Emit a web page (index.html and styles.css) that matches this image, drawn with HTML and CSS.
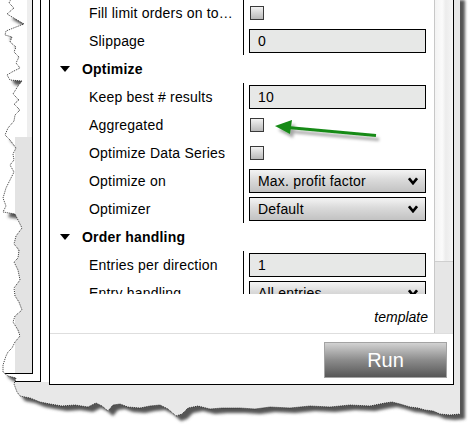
FILE: index.html
```html
<!DOCTYPE html>
<html>
<head>
<meta charset="utf-8">
<link rel="stylesheet" href="styles.css">
</head>
<body>
<div class="shot">
  <div class="pane-b">
    <div class="pane-a">
      <div class="gutter"></div>
      <div class="oscroll"><div class="othumb"></div></div>
    </div>
  </div>
  <div class="main">
    <div class="upper">
      <div class="content">
        <div class="list">
          <div class="rows">
            <div class="row"><div class="label">Fill limit orders on to…</div><div class="value"><span class="check"></span></div></div>
            <div class="row"><div class="label">Slippage</div><div class="value"><div class="input">0</div></div></div>
            <div class="head"><span class="tri"></span><span>Optimize</span></div>
            <div class="row"><div class="label">Keep best # results</div><div class="value"><div class="input">10</div></div></div>
            <div class="row"><div class="label">Aggregated</div><div class="value"><span class="check"></span></div></div>
            <div class="row"><div class="label">Optimize Data Series</div><div class="value"><span class="check"></span></div></div>
            <div class="row"><div class="label">Optimize on</div><div class="value"><div class="select"><span>Max. profit factor</span><svg class="chev" width="10" height="8" viewBox="0 0 10 8"><polyline points="1,1.3 5,6.2 9,1.3" fill="none" stroke="#000" stroke-width="2.6"/></svg></div></div></div>
            <div class="row"><div class="label">Optimizer</div><div class="value"><div class="select"><span>Default</span><svg class="chev" width="10" height="8" viewBox="0 0 10 8"><polyline points="1,1.3 5,6.2 9,1.3" fill="none" stroke="#000" stroke-width="2.6"/></svg></div></div></div>
            <div class="head"><span class="tri"></span><span>Order handling</span></div>
            <div class="row"><div class="label">Entries per direction</div><div class="value"><div class="input">1</div></div></div>
            <div class="row"><div class="label">Entry handling</div><div class="value"><div class="select"><span>All entries</span><svg class="chev" width="10" height="8" viewBox="0 0 10 8"><polyline points="1,1.3 5,6.2 9,1.3" fill="none" stroke="#000" stroke-width="2.6"/></svg></div></div></div>
          </div>
        </div>
        <div class="tplrow"><span class="tpl">template</span></div>
      </div>
      <div class="vscroll"><div class="vthumb"></div></div>
    </div>
    <div class="footer"><button class="run">Run</button></div>
  </div>

  <svg class="torn" width="470" height="428" viewBox="0 0 470 428">
    <defs>
      <filter id="blur" x="-20%" y="-20%" width="140%" height="140%"><feGaussianBlur stdDeviation="1.6"/></filter>
      <mask id="outside" maskUnits="userSpaceOnUse" x="0" y="0" width="470" height="428">
        <rect x="0" y="0" width="470" height="428" fill="#fff"/>
        <path fill="#000" d="M13 -5 L9 3 L14 8 L7 14 L24 24 L16 27 L6 31 L5 35 L12 37 L10 42 L16 47 L14 52 L19 57 L16 63 L20 68 L12 72 L7 75 L10 80 L22 81 L18 86 L13 94 L19 100 L14 104 L20 110 L15 115 L14 121 L8 128 L5 135 L10 140 L16 148 L13 154 L14 160 L10 165 L14 172 L11 178 L6 188 L3 198 L6 206 L3 212 L15 214 L22 228 L16 236 L14 244 L19 250 L18 258 L14 262 L18 270 L20 280 L14 288 L15 296 L19 302 L22 310 L15 316 L13 322 L18 330 L20 336 L15 342 L12 348 L8 352 L6 356 L3 365 L3 372 L8 376 L16 378 L14 384 L17 392 L20 396 L30 398 L40 402 L50 404 L62 406 L75 405 L88 407 L96 403 L102 406 L108 411 L113 405 L120 404 L128 407 L140 408 L150 406 L160 405 L168 409 L176 416 L182 414 L188 408 L198 406 L210 409 L222 408 L240 408 L255 409 L270 407 L290 408 L310 406 L330 407 L350 405 L370 406 L385 403 L392 402 L400 404 L410 407 L418 408 L425 410 L433 411 L440 414 L450 415 L460 414 L460 -5 Z"/>
      </mask>
    </defs>
    <path fill="#fff" fill-rule="evenodd" d="M-10 -10 H480 V440 H-10 Z M13 -5 L9 3 L14 8 L7 14 L24 24 L16 27 L6 31 L5 35 L12 37 L10 42 L16 47 L14 52 L19 57 L16 63 L20 68 L12 72 L7 75 L10 80 L22 81 L18 86 L13 94 L19 100 L14 104 L20 110 L15 115 L14 121 L8 128 L5 135 L10 140 L16 148 L13 154 L14 160 L10 165 L14 172 L11 178 L6 188 L3 198 L6 206 L3 212 L15 214 L22 228 L16 236 L14 244 L19 250 L18 258 L14 262 L18 270 L20 280 L14 288 L15 296 L19 302 L22 310 L15 316 L13 322 L18 330 L20 336 L15 342 L12 348 L8 352 L6 356 L3 365 L3 372 L8 376 L16 378 L14 384 L17 392 L20 396 L30 398 L40 402 L50 404 L62 406 L75 405 L88 407 L96 403 L102 406 L108 411 L113 405 L120 404 L128 407 L140 408 L150 406 L160 405 L168 409 L176 416 L182 414 L188 408 L198 406 L210 409 L222 408 L240 408 L255 409 L270 407 L290 408 L310 406 L330 407 L350 405 L370 406 L385 403 L392 402 L400 404 L410 407 L418 408 L425 410 L433 411 L440 414 L450 415 L460 414 L460 -5 Z"/>
    <g mask="url(#outside)">
      <path fill="#555" filter="url(#blur)" transform="translate(5,5)" d="M13 -5 L9 3 L14 8 L7 14 L24 24 L16 27 L6 31 L5 35 L12 37 L10 42 L16 47 L14 52 L19 57 L16 63 L20 68 L12 72 L7 75 L10 80 L22 81 L18 86 L13 94 L19 100 L14 104 L20 110 L15 115 L14 121 L8 128 L5 135 L10 140 L16 148 L13 154 L14 160 L10 165 L14 172 L11 178 L6 188 L3 198 L6 206 L3 212 L15 214 L22 228 L16 236 L14 244 L19 250 L18 258 L14 262 L18 270 L20 280 L14 288 L15 296 L19 302 L22 310 L15 316 L13 322 L18 330 L20 336 L15 342 L12 348 L8 352 L6 356 L3 365 L3 372 L8 376 L16 378 L14 384 L17 392 L20 396 L30 398 L40 402 L50 404 L62 406 L75 405 L88 407 L96 403 L102 406 L108 411 L113 405 L120 404 L128 407 L140 408 L150 406 L160 405 L168 409 L176 416 L182 414 L188 408 L198 406 L210 409 L222 408 L240 408 L255 409 L270 407 L290 408 L310 406 L330 407 L350 405 L370 406 L385 403 L392 402 L400 404 L410 407 L418 408 L425 410 L433 411 L440 414 L450 415 L460 414 L460 -5 Z"/>
    </g>
    <path fill="none" stroke="#222" stroke-width="0.9" stroke-dasharray="1 1" d="M13 -5 L9 3 L14 8 L7 14 L24 24 L16 27 L6 31 L5 35 L12 37 L10 42 L16 47 L14 52 L19 57 L16 63 L20 68 L12 72 L7 75 L10 80 L22 81 L18 86 L13 94 L19 100 L14 104 L20 110 L15 115 L14 121 L8 128 L5 135 L10 140 L16 148 L13 154 L14 160 L10 165 L14 172 L11 178 L6 188 L3 198 L6 206 L3 212 L15 214 L22 228 L16 236 L14 244 L19 250 L18 258 L14 262 L18 270 L20 280 L14 288 L15 296 L19 302 L22 310 L15 316 L13 322 L18 330 L20 336 L15 342 L12 348 L8 352 L6 356 L3 365 L3 372 L8 376 L16 378 L14 384 L17 392 L20 396 L30 398 L40 402 L50 404 L62 406 L75 405 L88 407 L96 403 L102 406 L108 411 L113 405 L120 404 L128 407 L140 408 L150 406 L160 405 L168 409 L176 416 L182 414 L188 408 L198 406 L210 409 L222 408 L240 408 L255 409 L270 407 L290 408 L310 406 L330 407 L350 405 L370 406 L385 403 L392 402 L400 404 L410 407 L418 408 L425 410 L433 411 L440 414 L450 415 L460 414"/>
  </svg>

  <svg class="arrow" width="470" height="428" viewBox="0 0 470 428">
    <defs>
      <filter id="ds" x="-20%" y="-50%" width="140%" height="200%"><feDropShadow dx="3" dy="4" stdDeviation="1.6" flood-color="#000" flood-opacity="0.35"/></filter>
    </defs>
    <g filter="url(#ds)" fill="#168a16" stroke="#168a16">
      <line x1="376" y1="135.5" x2="288" y2="127.5" stroke-width="3.2"/>
      <polygon points="275,126 292,120 290,134" stroke="none"/>
    </g>
  </svg>
</div>
</body>
</html>
```

FILE: styles.css
```css
body {
  margin: 0;
  background: #fff;
  font-family: "Liberation Sans", Arial, sans-serif;
  color: #000;
}

.shot {
  position: relative;
  width: 470px;
  height: 428px;
  overflow: hidden;
  background: #e8e8e8;
  display: flex;
  align-items: flex-start;
}

.pane-b {
  flex: none;
  width: 41px;
  height: 382px;
  box-sizing: border-box;
  border-right: 1px solid #000;
  border-bottom: 1px solid #000;
  background: #fff;
  box-shadow: 8px 0 0 #fff;
}

.pane-a {
  width: 33px;
  height: 374px;
  box-sizing: border-box;
  border-right: 1px solid #000;
  border-bottom: 1px solid #000;
  display: flex;
}

.gutter {
  width: 15px;
  background: #fff;
}

.oscroll {
  width: 17px;
  background: #e3e3e3;
}

.othumb {
  height: 137px;
  background: linear-gradient(90deg, #fff 0, #fff 68%, #eeeeee 68%, #eeeeee 100%);
}

.main {
  flex: none;
  margin-left: 8px;
  width: 405px;
  height: 385px;
  box-sizing: border-box;
  border: 1px solid #000;
  border-top: none;
  background: #fff;
  display: flex;
  flex-direction: column;
}

.upper {
  height: 333px;
  display: flex;
}

.content {
  flex: 1;
  min-width: 0;
  display: flex;
  flex-direction: column;
}

.list {
  height: 294px;
  overflow: hidden;
}

.rows {
  margin-top: -1px;
  letter-spacing: 0.2px;
}

.row {
  display: grid;
  grid-template-columns: 193px 1fr;
  height: 28px;
  font-size: 14px;
}

.label {
  padding-left: 39px;
  line-height: 28px;
  white-space: nowrap;
  overflow: hidden;
}

.value {
  border-left: 1px solid #000;
  padding-left: 5px;
  display: flex;
  align-items: center;
}

.input {
  width: 177px;
  height: 24px;
  box-sizing: border-box;
  border: 1px solid #000;
  background: #e7e8e7;
  padding-left: 8px;
  line-height: 22px;
  font-size: 14px;
}

.check {
  width: 14px;
  height: 14px;
  box-sizing: border-box;
  margin-left: 1px;
  border: 1px solid #3a3a3a;
  background: linear-gradient(#f2f2f2, #b9b9b9);
}

.select {
  width: 177px;
  height: 24px;
  box-sizing: border-box;
  border: 1px solid #000;
  background: linear-gradient(#f4f4f4, #dadada 45%, #c2c2c2);
  padding: 0 7px 0 8px;
  display: flex;
  justify-content: space-between;
  align-items: center;
  font-size: 14px;
}

.chev {
  display: block;
}

.head {
  height: 28px;
  display: flex;
  align-items: center;
  font-size: 14px;
  font-weight: bold;
}

.tri {
  width: 0;
  height: 0;
  margin-left: 10px;
  margin-right: 12px;
  border-left: 5px solid transparent;
  border-right: 5px solid transparent;
  border-top: 6px solid #000;
}

.tplrow {
  height: 39px;
  box-sizing: border-box;
  padding: 15px 6px 0 0;
  text-align: right;
  font-size: 14px;
  font-style: italic;
  line-height: 16px;
}

.vscroll {
  width: 19px;
  box-sizing: border-box;
  border-left: 1px solid #c8c8c8;
  background: #e6e6e6;
}

.vthumb {
  height: 262px;
  box-sizing: border-box;
  border-bottom: 1px solid #cfcfcf;
  background: linear-gradient(90deg, #f3f3f3 0, #fbfbfb 40%, #ececec 60%, #f6f6f6 100%);
}

.footer {
  flex: 1;
  border-top: 1px solid #dedede;
  display: flex;
  justify-content: flex-end;
  align-items: flex-start;
  padding: 8px 6px 0 0;
}

.run {
  width: 123px;
  height: 36px;
  box-sizing: border-box;
  border: 1px solid #a3a3a3;
  background: linear-gradient(#d2d2d2, #8c8c8c 50%, #575757);
  color: #fff;
  font-family: "Liberation Sans", Arial, sans-serif;
  font-size: 20px;
  padding: 0;
}

.torn,
.arrow {
  position: absolute;
  left: 0;
  top: 0;
  pointer-events: none;
}
```
